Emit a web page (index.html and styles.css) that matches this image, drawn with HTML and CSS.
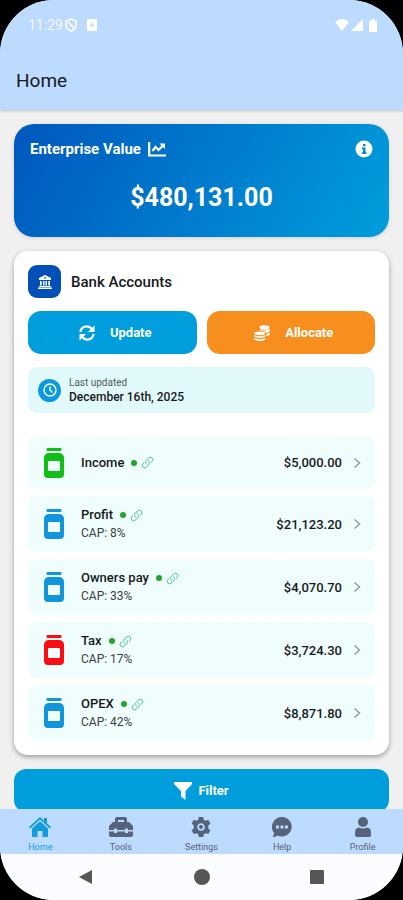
FILE: index.html
```html
<!DOCTYPE html>
<html lang="en">
<head>
<meta charset="utf-8">
<meta name="viewport" content="width=device-width, initial-scale=1">
<title>Home</title>
<link rel="stylesheet" href="styles.css">
</head>
<body>
<svg class="sprite" aria-hidden="true">
  <symbol id="jar" viewBox="0 0 20 32">
    <rect x="2.500" y="1" width="15" height="3" rx="1"/>
    <path fill-rule="evenodd" d="M4 6h12q4 1 4 5v16q0 4-4 4H4q-4 0-4-4V11q0-4 4-5zM5 14q-1 0-1 1v8q0 1 1 1h10q1 0 1-1v-8q0-1-1-1z"/>
  </symbol>
  <symbol id="link" viewBox="0 0 24 24">
    <path fill="none" stroke="currentColor" stroke-width="1.800" stroke-linecap="round" stroke-linejoin="round" d="M13.200 8.700a4.500 4.500 0 0 1 1.200 7.200l-4.500 4.500a4.500 4.500 0 0 1-6.400-6.400l1.800-1.700m13.400-.6 1.800-1.700a4.500 4.500 0 0 0-6.400-6.400L9.600 8.100a4.500 4.500 0 0 0 1.200 7.200"/>
  </symbol>
  <symbol id="chevron" viewBox="0 0 8 12">
    <path fill="none" stroke="currentColor" stroke-width="1.300" d="M1.500 1.500 6.500 6l-5 4.500"/>
  </symbol>
</svg>
<div class="phone">
  <header class="top">
    <div class="status">
      <span class="time">11:29</span>
      <svg class="s-shield" width="12" height="14" viewBox="0 0 12 14" fill="none" stroke="currentColor" stroke-width="1.500"><path d="M6 1 11 3v4q0 4-5 6-5-2-5-6V3zM3 4l6 6"/></svg>
      <svg class="s-app" width="10" height="12" viewBox="0 0 10 12" fill="currentColor"><path fill-rule="evenodd" d="M1 0h8q1 0 1 1v10q0 1-1 1H1q-1 0-1-1V1q0-1 1-1zm4 3L2.500 8h1.200L5 6l1.300 2h1.200z"/></svg>
      <span class="signals">
        <svg width="14" height="12" viewBox="0 0 14 12" fill="currentColor"><path d="M0 3q7-6 14 0L7 12z"/></svg>
        <svg width="12" height="12" viewBox="0 0 12 12" fill="currentColor"><path d="M12 0v12H0z"/></svg>
        <svg class="s-battery" width="8" height="13" viewBox="0 0 8 13" fill="currentColor"><path d="M2.500 0h3v1.500H7q1 0 1 1V12q0 1-1 1H1q-1 0-1-1V2.500q0-1 1-1h1.500z"/></svg>
      </span>
    </div>
    <h1>Home</h1>
  </header>

  <main>
    <section class="value">
      <div class="value-head">
        <h2>Enterprise Value</h2>
        <svg width="18" height="15" viewBox="0 0 18 15" fill="none" stroke="currentColor" stroke-width="2.200"><path d="M1.200 0v13.500H18M4.500 9l3-4 3 3 4.500-4.500"/><path fill="currentColor" stroke="none" d="M11.500 1.500H17V7z"/></svg>
        <button class="info" aria-label="About enterprise value"><svg width="18" height="18" viewBox="0 0 18 18"><circle cx="9" cy="9" r="8.500" fill="#fff"/><path fill="#058bd2" d="M8 4h2.500v2.300H8zM7 7.500h3.500v4.700h1V14H7v-1.800h1V9.300H7z"/></svg></button>
      </div>
      <p class="total">$480,131.00</p>
    </section>

    <section class="accounts">
      <div class="accounts-head">
        <span class="bank"><svg width="14" height="14" viewBox="0 0 14 14" fill="#fff"><path fill-rule="evenodd" d="M7 0 13 3v2H1V3zM7 2a.8.8 0 1 0 .1 0zM2 6h1.700v4.500H2zM5 6h1.500v4.500H5zM7.500 6H9v4.500H7.500zM10.300 6H12v4.500h-1.700zM1 11h12v1H1zM0 12.500h14V14H0z"/></svg></span>
        <h2>Bank Accounts</h2>
      </div>
      <div class="actions">
        <button class="action update"><svg width="16" height="16" viewBox="0 0 16 16"><path fill="none" stroke="currentColor" stroke-width="2.300" d="M1.500 7a6.200 6.200 0 0 1 11.200-3M14.500 9a6.200 6.200 0 0 1-11.200 3"/><path fill="currentColor" d="M15.500.5V7H9zM.5 15.500V9H7z"/></svg>Update</button>
        <button class="action allocate"><svg width="16" height="16" viewBox="0 0 16 16" fill="currentColor"><ellipse cx="10.500" cy="2.500" rx="5" ry="2.300"/><path d="M15.800 4v2q-.8 1.600-3.800 1.900Q10.300 5.600 6 5.700V4.800q4.500 1.800 9.800-.8zM15.800 7.500v2q-.8 1.300-3.300 1.700V8.900q2.300-.4 3.300-1.400z"/><ellipse cx="5.700" cy="8.300" rx="5.300" ry="1.900"/><path d="M.3 10q5 2.500 11 0v1.700q-5.500 2.300-11 0zM.3 13q5.500 2.300 11 0v1.400q-5.500 3-11 0z"/></svg>Allocate</button>
      </div>
      <div class="updated">
        <span class="clock"><svg width="14" height="14" viewBox="0 0 14 14" fill="none" stroke="#fff" stroke-width="1.400"><circle cx="7" cy="7" r="6"/><path d="M7 3.500V7l2.500 2.500"/></svg></span>
        <div><p class="label">Last updated</p><p class="date">December 16th, 2025</p></div>
      </div>
      <ul class="list">
        <li><a class="row" href="#income"><svg class="jar green"><use href="#jar"/></svg><span class="info-col"><span class="name">Income<i class="dot"></i><svg class="link"><use href="#link"/></svg></span></span><span class="amount">$5,000.00</span><svg class="chev"><use href="#chevron"/></svg></a></li>
        <li><a class="row" href="#profit"><svg class="jar"><use href="#jar"/></svg><span class="info-col"><span class="name">Profit<i class="dot"></i><svg class="link"><use href="#link"/></svg></span><span class="cap">CAP: 8%</span></span><span class="amount">$21,123.20</span><svg class="chev"><use href="#chevron"/></svg></a></li>
        <li><a class="row" href="#owners"><svg class="jar"><use href="#jar"/></svg><span class="info-col"><span class="name">Owners pay<i class="dot"></i><svg class="link"><use href="#link"/></svg></span><span class="cap">CAP: 33%</span></span><span class="amount">$4,070.70</span><svg class="chev"><use href="#chevron"/></svg></a></li>
        <li><a class="row" href="#tax"><svg class="jar red"><use href="#jar"/></svg><span class="info-col"><span class="name">Tax<i class="dot"></i><svg class="link"><use href="#link"/></svg></span><span class="cap">CAP: 17%</span></span><span class="amount">$3,724.30</span><svg class="chev"><use href="#chevron"/></svg></a></li>
        <li><a class="row" href="#opex"><svg class="jar"><use href="#jar"/></svg><span class="info-col"><span class="name">OPEX<i class="dot"></i><svg class="link"><use href="#link"/></svg></span><span class="cap">CAP: 42%</span></span><span class="amount">$8,871.80</span><svg class="chev"><use href="#chevron"/></svg></a></li>
      </ul>
    </section>

    <button class="filter"><svg width="18" height="18" viewBox="0 0 18 18" fill="currentColor"><path d="M0 0h18v2l-6.500 7v9L7 14.500V9L0 2z"/></svg>Filter</button>
  </main>

  <nav class="tabs">
    <a class="tab active" href="#home"><svg width="22" height="20" viewBox="0 0 22 20" fill="currentColor"><path d="M11 0 15 3.700V1h3v5.400l4 3.700-1.200 1.300L11 2.500 1.200 11.400 0 10.100z"/><path d="M11 4.200 19 11.500V20h-5.500v-6h-5v6H3v-8.500z"/></svg>Home</a>
    <a class="tab" href="#tools"><svg width="24" height="20" viewBox="0 0 24 20" fill="currentColor"><path fill-rule="evenodd" d="M6 5V2q0-2 2-2h8q2 0 2 2v3h2l4 4v4h-5v-1.500h-3V13H8v-1.500H5V13H0V9l4-4zm3 0h6V3H9zM0 14.500h5V16h3v-1.500h8V16h3v-1.500h5V18q0 2-2 2H2q-2 0-2-2z"/></svg>Tools</a>
    <a class="tab" href="#settings"><svg width="20" height="20" viewBox="0 0 20 20" fill="currentColor"><path fill-rule="evenodd" d="M7.800 0h4.400l.6 2.700 1.700 1 2.700-.9 2.200 3.800-2.100 1.900v2.900l2.100 1.900-2.200 3.800-2.700-.8-1.700 1-.6 2.700H7.800l-.6-2.700-1.700-1-2.700.8-2.200-3.800 2.100-1.900V8.500L.6 6.600l2.200-3.800 2.700.9 1.700-1zM10 6.200a3.800 3.800 0 1 0 .1 0zM10 8a2 2 0 1 1-.1 0z"/></svg>Settings</a>
    <a class="tab" href="#help"><svg width="20" height="20" viewBox="0 0 20 20" fill="currentColor"><path fill-rule="evenodd" d="M10 0a10 9.700 0 1 1-4.500 18.500Q3 20 .5 20q1.500-2 1.500-4A10 10 0 0 1 10 0zM4 8.500v3h3v-3zm4.500 0v3h3v-3zm4.500 0v3h3v-3z"/></svg>Help</a>
    <a class="tab" href="#profile"><svg width="16" height="20" viewBox="0 0 16 20" fill="currentColor"><circle cx="8" cy="5" r="5"/><path d="M4 10.500q4 2 8 0 4 .5 4 5V18q0 2-2 2H2q-2 0-2-2v-2.500q0-4.500 4-5z"/></svg>Profile</a>
  </nav>
  <footer class="system">
    <button aria-label="Back"><svg width="16" height="16" viewBox="0 0 16 16"><path d="M14 1v14L1 8z"/></svg></button>
    <button aria-label="Home screen"><svg width="16" height="16" viewBox="0 0 16 16"><circle cx="8" cy="8" r="8"/></svg></button>
    <button aria-label="Recent apps"><svg width="16" height="16" viewBox="0 0 16 16"><rect x="1" y="1" width="14" height="14" rx="1"/></svg></button>
  </footer>
</div>
</body>
</html>
```
FILE: styles.css
```css
* { box-sizing: border-box; }
body { margin: 0; background: #000; font-family: Roboto, "Liberation Sans", sans-serif; color: #16191c; }
h1, h2, p, ul { margin: 0; padding: 0; }
button { border: 0; padding: 0; background: none; font: inherit; color: inherit; cursor: pointer; }
a { color: inherit; text-decoration: none; }
svg { display: block; flex: none; }
.sprite { position: absolute; width: 0; height: 0; }

.phone { display: flex; flex-direction: column; height: 100vh; overflow: hidden; border-radius: 54px; background: #f0f0f0; }
.top { flex: none; background: #bddaff; box-shadow: 0 1px 3px rgba(0, 0, 0, .2); z-index: 1; }
.status { display: flex; align-items: center; height: 50px; padding: 0 26px 0 28px; color: #fff; font-size: 14px; }
.time { opacity: .85; }
.s-shield { margin-left: 2px; }
.s-app { margin-left: 10px; }
.signals { display: flex; align-items: center; gap: 2px; margin-left: auto; }
.s-battery { margin-left: 4px; }
h1 { padding: 20px 16px 18px; font-size: 19px; line-height: 22px; font-weight: 400; }

main { flex: 1; min-height: 0; overflow-y: auto; scrollbar-width: none; padding: 14px; display: flex; flex-direction: column; gap: 14px; }
main > * { flex: none; }
.value { padding: 16px; height: 113px; border-radius: 20px; color: #fff; background: linear-gradient(120deg, #0057bd, #009edc); box-shadow: 0 1px 4px rgba(0, 0, 0, .12); }
.value-head { display: flex; align-items: center; gap: 7px; height: 18px; }
.value-head h2 { font-size: 15px; font-weight: 700; }
.info { margin-left: auto; }
.total { margin-top: 24px; text-align: center; font-size: 25px; line-height: 32px; font-weight: 700; }

.accounts { padding: 14px; border-radius: 14px; background: #fff; box-shadow: 0 2px 5px rgba(0, 0, 0, .35); }
.accounts-head { display: flex; align-items: center; gap: 10px; }
.bank { display: grid; place-items: center; width: 33px; height: 33px; border-radius: 9px; background: #0050b8; }
.accounts-head h2 { font-size: 15px; font-weight: 500; }
.actions { display: grid; grid-template-columns: 1fr 1fr; gap: 10px; margin-top: 13px; }
.action { display: flex; align-items: center; justify-content: center; gap: 15px; height: 43px; padding-left: 6px; border-radius: 13px; color: #fff; font-size: 13px; font-weight: 700; }
.update { background: #009edc; }
.allocate { background: #f78f1e; }
.updated { display: flex; align-items: center; gap: 8px; height: 46px; margin-top: 13px; padding: 0 10px; border-radius: 9px; background: #e2f9fb; }
.clock { display: grid; place-items: center; width: 23px; height: 23px; border-radius: 50%; background: #0a9add; }
.label { font-size: 10px; line-height: 14px; color: #4f5b5e; }
.date { font-size: 12px; line-height: 15px; font-weight: 500; }

.list { display: flex; flex-direction: column; gap: 7px; margin-top: 23px; list-style: none; }
.row { display: flex; align-items: center; min-height: 53px; padding: 10px 14px 10px 16px; border-radius: 9px; background: #effdfd; }
.jar { width: 20px; height: 32px; fill: #1295db; }
.green { fill: #12bd17; }
.red { fill: #fb0d12; }
.info-col { flex: 1; margin-left: 17px; }
.name { display: flex; align-items: center; font-size: 13px; line-height: 18px; font-weight: 500; }
.dot { width: 6px; height: 6px; margin: 0 4px 0 7px; border-radius: 50%; background: #22a52a; }
.link { width: 13px; height: 13px; color: #48bd8a; }
.cap { display: block; font-size: 12px; line-height: 18px; color: #3b4142; }
.amount { font-size: 13px; font-weight: 500; }
.chev { width: 8px; height: 12px; margin-left: 11px; color: #8f9596; }

.filter { display: flex; align-items: center; justify-content: center; gap: 6px; height: 43px; border-radius: 12px; background: #009edc; color: #fff; font-size: 13px; font-weight: 700; }

.tabs { flex: none; display: grid; grid-template-columns: repeat(5, 1fr); height: 45px; background: #bddaff; }
.tab { display: flex; flex-direction: column; align-items: center; padding-top: 8px; gap: 4px; color: #56637c; font-size: 9px; line-height: 12px; }
.active { color: #139bdc; }
.system { flex: none; display: flex; align-items: center; justify-content: space-between; height: 46px; padding: 0 78px; background: #fbfcff; }
.system svg { fill: #555756; }
```
